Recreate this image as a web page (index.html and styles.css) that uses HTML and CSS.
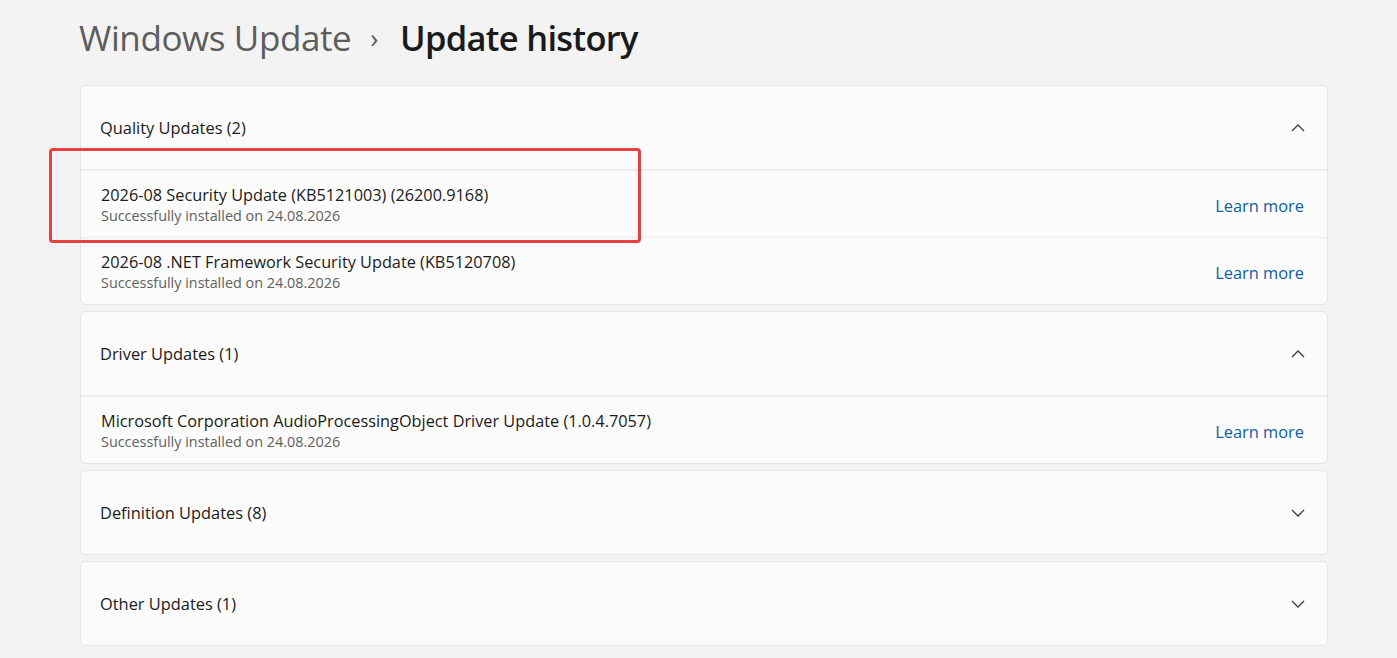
FILE: index.html
```html
<!DOCTYPE html>
<html>
<head>
<meta charset="utf-8">
<link rel="stylesheet" href="styles.css">
</head>
<body>
<div class="page">
  <h1 class="crumbs"><span class="parent">Windows Update</span><span class="sep">&#x203A;</span><span class="current">Update history</span></h1>

  <section class="card">
    <div class="head"><span>Quality Updates (2)</span>
      <svg class="chev" width="14" height="8" viewBox="0 0 14 8"><polyline points="1,7 7,1 13,7"/></svg></div>
    <div class="items">
      <div class="row first"><div class="txt"><div class="name">2026-08 Security Update (KB5121003) (26200.9168)</div><div class="sub">Successfully installed on 24.08.2026</div></div><a class="link">Learn more</a></div>
      <div class="row"><div class="txt"><div class="name">2026-08 .NET Framework Security Update (KB5120708)</div><div class="sub">Successfully installed on 24.08.2026</div></div><a class="link">Learn more</a></div>
    </div>
  </section>

  <section class="card">
    <div class="head"><span>Driver Updates (1)</span>
      <svg class="chev" width="14" height="8" viewBox="0 0 14 8"><polyline points="1,7 7,1 13,7"/></svg></div>
    <div class="items">
      <div class="row first"><div class="txt"><div class="name">Microsoft Corporation AudioProcessingObject Driver Update (1.0.4.7057)</div><div class="sub">Successfully installed on 24.08.2026</div></div><a class="link">Learn more</a></div>
    </div>
  </section>

  <section class="card">
    <div class="head closed"><span>Definition Updates (8)</span>
      <svg class="chev" width="14" height="8" viewBox="0 0 14 8"><polyline points="1,1 7,7 13,1"/></svg></div>
  </section>

  <section class="card">
    <div class="head closed"><span>Other Updates (1)</span>
      <svg class="chev" width="14" height="8" viewBox="0 0 14 8"><polyline points="1,1 7,7 13,1"/></svg></div>
  </section>

  <div class="highlight"></div>
</div>
</body>
</html>
```

FILE: styles.css
```css
html, body {
  margin: 0;
  padding: 0;
  background: #f3f3f3;
}
body {
  font-family: "Open Sans", "Noto Sans", sans-serif;
  color: #1b1b1b;
}
.page {
  position: relative;
  padding: 0 69px 0 80px;
  width: 1248px;
}
.crumbs {
  margin: 0;
  padding-top: 14px;
  height: 85px;
  box-sizing: border-box;
  display: flex;
  align-items: baseline;
  font-size: 35px;
  line-height: 48px;
  font-weight: 400;
  letter-spacing: -0.4px;
}
.parent {
  color: #5d5d5d;
  margin-left: -1px;
}
.sep {
  color: #5d5d5d;
  font-size: 27px;
  margin: 0 22px 0 19px;
  position: relative;
  top: -3px;
}
.current {
  color: #1a1a1a;
  font-weight: 600;
  font-size: 34.5px;
  letter-spacing: -0.7px;
}
.card {
  background: #fbfbfb;
  border: 1px solid #e5e5e5;
  border-radius: 6px;
  margin-bottom: 6px;
  overflow: hidden;
}
.head {
  height: 83px;
  display: flex;
  align-items: center;
  justify-content: space-between;
  padding: 0 22px 0 19px;
  font-size: 16.4px;
  color: #1b1b1b;
}
.head.closed {
  height: 83px;
}
.chev polyline {
  fill: none;
  stroke: #3d3d3d;
  stroke-width: 1.3;
}
.items {
  border-top: 2px solid #ebebeb;
}
.row {
  height: 66px;
  display: flex;
  align-items: center;
  justify-content: space-between;
  padding: 0 23px 0 20px;
  border-top: 1px solid #ededed;
}
.row.first {
  border-top: none;
  height: 66px;
}
.txt {
  padding-top: 3px;
}
.name {
  font-size: 16.3px;
  line-height: 21px;
  color: #1b1b1b;
}
.sub {
  font-size: 14.4px;
  line-height: 20px;
  color: #616161;
}
.link {
  font-size: 16.4px;
  color: #115ea3;
  position: relative;
  top: 1px;
}
.highlight {
  position: absolute;
  left: 49px;
  top: 148px;
  width: 586px;
  height: 89px;
  border: 3px solid #e8403f;
  border-radius: 4px;
}
```
